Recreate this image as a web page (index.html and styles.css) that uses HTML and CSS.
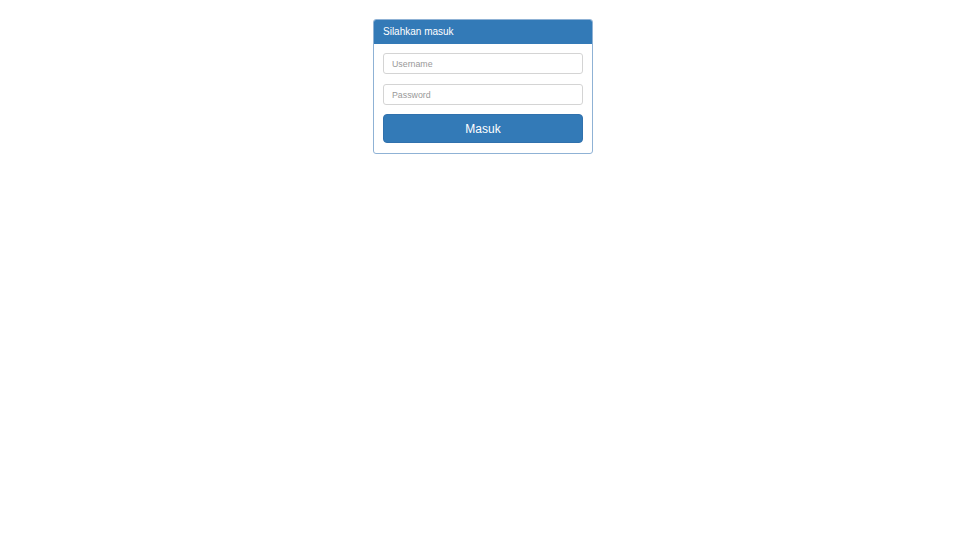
FILE: index.html
```
<!DOCTYPE html>
<html>
<head>
<meta charset="utf-8">
<link rel="stylesheet" href="styles.css">
</head>
<body>
<div class="panel">
  <div class="panel-heading">Silahkan masuk</div>
  <form class="panel-body">
    <input class="field" type="text" placeholder="Username">
    <input class="field" type="password" placeholder="Password">
    <button class="btn" type="button">Masuk</button>
  </form>
</div>
</body>
</html>
```
FILE: styles.css
```
html, body {
  margin: 0;
  padding: 0;
  background: #fff;
  font-family: "Liberation Sans", Arial, sans-serif;
}
.panel {
  box-sizing: border-box;
  width: 220px;
  margin: 19px auto 0;
  border: 1px solid #8fb2d5;
  border-radius: 3px;
  overflow: hidden;
}
.panel-heading {
  background: #337ab7;
  color: #fff;
  height: 24px;
  line-height: 24px;
  padding: 0 9px;
  font-size: 10px;
}
.panel-body {
  margin: 0;
  padding: 9px 9px 10px;
  display: flex;
  flex-direction: column;
  gap: 10px;
}
.field {
  box-sizing: border-box;
  width: 100%;
  height: 21px;
  margin: 0;
  padding: 0 8px;
  border: 1px solid #d4d4d4;
  border-radius: 3px;
  font-family: "Liberation Sans", Arial, sans-serif;
  font-size: 8.8px;
  color: #555;
  outline: none;
}
.field::placeholder {
  color: #999;
}
.btn {
  box-sizing: border-box;
  width: 100%;
  height: 29px;
  margin: -1px 0 0;
  padding: 0;
  border: 1px solid #3071ad;
  border-radius: 4px;
  background: #337ab7;
  color: #fff;
  font-family: "Liberation Sans", Arial, sans-serif;
  font-size: 12px;
  cursor: pointer;
}
```
